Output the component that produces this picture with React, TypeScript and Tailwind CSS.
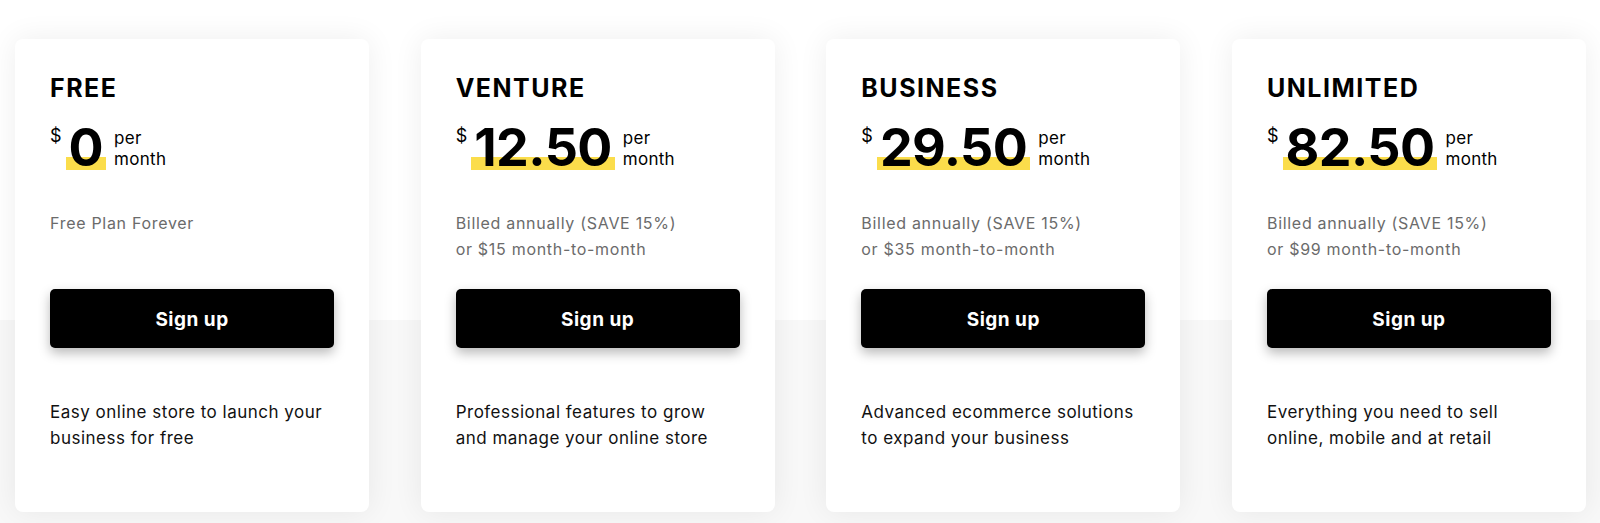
import React from 'react';

type Plan = {
  name: string;
  price: string;
  billing: string[];
  description: string[];
};

const plans: Plan[] = [
  {
    name: 'FREE',
    price: '0',
    billing: ['Free Plan Forever'],
    description: ['Easy online store to launch your', 'business for free'],
  },
  {
    name: 'VENTURE',
    price: '12.50',
    billing: ['Billed annually (SAVE 15%)', 'or $15 month-to-month'],
    description: ['Professional features to grow', 'and manage your online store'],
  },
  {
    name: 'BUSINESS',
    price: '29.50',
    billing: ['Billed annually (SAVE 15%)', 'or $35 month-to-month'],
    description: ['Advanced ecommerce solutions', 'to expand your business'],
  },
  {
    name: 'UNLIMITED',
    price: '82.50',
    billing: ['Billed annually (SAVE 15%)', 'or $99 month-to-month'],
    description: ['Everything you need to sell', 'online, mobile and at retail'],
  },
];

const PlanCard: React.FC<{ plan: Plan }> = ({ plan }) => (
  <div className="w-[354px] h-[473px] shrink-0 rounded-[8px] bg-white shadow-[0_0_30px_rgba(0,0,0,0.07)] px-[35px] pt-[34px] flex flex-col">
    {/* Plan name */}
    <h3 className="text-[25px] leading-[30px] font-bold text-black tracking-[1.5px]">
      {plan.name}
    </h3>

    {/* Price */}
    <div className="mt-[22px] flex items-start">
      <span className="text-[18px] leading-[20px] text-black mt-[1px]">$</span>
      <span className="ml-[4px] inline-block px-[3px] text-[52px] leading-[45px] font-bold text-black tracking-[-0.6px] bg-[linear-gradient(to_bottom,transparent_32px,#fbdd4b_32px)]">
        {plan.price}
      </span>
      <div className="ml-[8px] mt-[3px] text-[17px] leading-[21px] text-black tracking-[0.3px]">
        <div>per</div>
        <div>month</div>
      </div>
    </div>

    {/* Billing */}
    <div className="mt-[40px] h-[52px] text-[16px] leading-[26px] text-[#6b6b6b] tracking-[0.7px]">
      {plan.billing.map((line) => (
        <div key={line}>{line}</div>
      ))}
    </div>

    {/* CTA */}
    <button className="mt-[27px] h-[59px] w-full rounded-[5px] bg-black pt-[4px] text-white text-[19px] font-bold tracking-[0.5px] shadow-[0_5px_12px_rgba(0,0,0,0.28)]">
      Sign up
    </button>

    {/* Description */}
    <div className="mt-[51px] text-[17px] leading-[26px] text-[#111] tracking-[0.5px]">
      {plan.description.map((line) => (
        <div key={line}>{line}</div>
      ))}
    </div>
  </div>
);

export default function App() {
  return (
    <div className="w-[1600px] h-[523px] overflow-hidden bg-[linear-gradient(to_bottom,#ffffff_320px,#f8f8f8_320px)] font-['Inter',sans-serif]">
      <div className="flex justify-between pl-[15px] pr-[14px] pt-[39px]">
        {plans.map((plan) => (
          <PlanCard key={plan.name} plan={plan} />
        ))}
      </div>
    </div>
  );
}
